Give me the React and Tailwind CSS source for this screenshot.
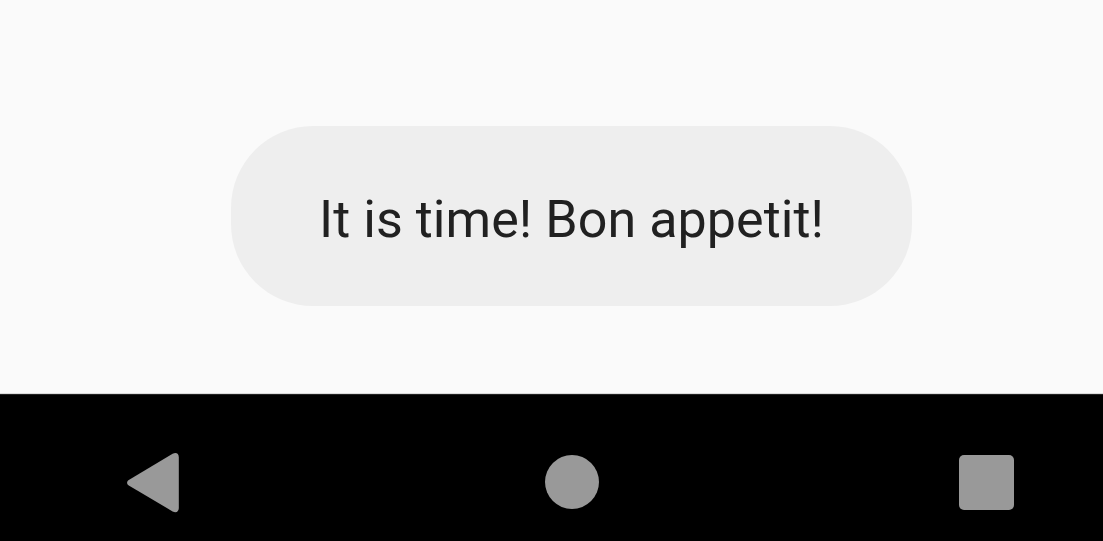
const Toast = ({ message }) => (
  <div className="mt-[126px] flex h-[180px] w-[681px] items-center justify-center rounded-[82px] bg-[#eeeeee]">
    <p className="mt-[8px] whitespace-nowrap font-['Roboto',sans-serif] text-[52px] leading-[60px] tracking-[0.06px] text-[#212121]">
      {message}
    </p>
  </div>
);

const NavigationBar = () => (
  <nav className="flex h-[147px] items-start justify-between border-t border-[#222222] bg-black pt-[57px] pr-[89px] pl-[126px]">
    <button aria-label="Back">
      <svg className="block h-[62px] w-[59px]" viewBox="0 0 59 62" fill="#999999">
        <path d="M2.8 28 L46.6 1.7 C50 -0.2 52.8 1.3 52.8 5.2 V56 C52.8 59.8 50 61.3 46.6 59.4 L2.8 33.6 C0.5 32.1 0.5 29.4 2.8 28 Z" />
      </svg>
    </button>
    <button aria-label="Home" className="mt-[3px] size-[54px] rounded-full bg-[#999999]" />
    <button aria-label="Overview" className="mt-[3px] size-[55px] rounded-[5px] bg-[#999999]" />
  </nav>
);

export default function App() {
  return (
    <div className="flex h-screen flex-col overflow-hidden bg-[#fafafa]">
      <main className="flex-1 border-b border-[#dcdcdc] pl-[231px]">
        <Toast message="It is time! Bon appetit!" />
      </main>
      <NavigationBar />
    </div>
  );
}
